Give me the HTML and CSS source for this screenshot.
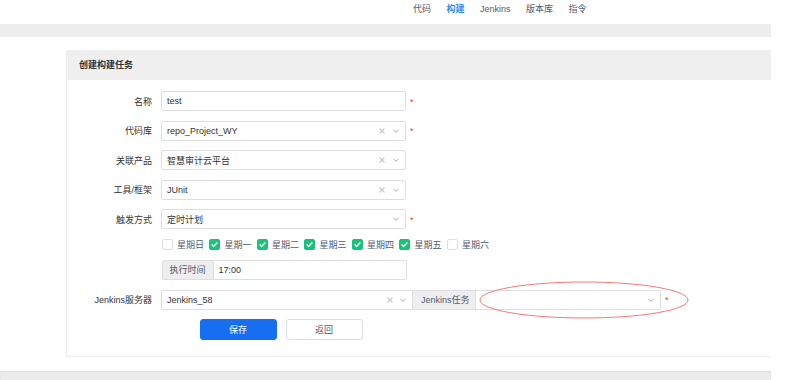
FILE: index.html
```html
<!DOCTYPE html>
<html lang="zh-CN">
<head>
    <meta charset="UTF-8">
    <meta name="viewport" content="width=device-width, initial-scale=1.0">
    <title>创建构建任务</title>
    <link rel="stylesheet" href="styles.css">
</head>
<body>
<div class="page">
    <div class="topnav">
        <a class="nav-item">代码</a>
        <a class="nav-item active">构建</a>
        <a class="nav-item">Jenkins</a>
        <a class="nav-item">版本库</a>
        <a class="nav-item">指令</a>
    </div>
    <div class="band"></div>

    <div class="card">
        <div class="card-head">创建构建任务</div>
        <form class="card-body">
            <div class="row">
                <label class="row-label">名称</label>
                <input class="input" type="text" value="test">
                <span class="req">*</span>
            </div>
            <div class="row">
                <label class="row-label">代码库</label>
                <div class="select">
                    <span class="select-value">repo_Project_WY</span>
                    <svg class="clear" width="6" height="6" viewBox="0 0 6 6"><path d="M0.5 0.5L5.5 5.5M5.5 0.5L0.5 5.5"/></svg>
                    <svg class="caret" width="6" height="4" viewBox="0 0 6 4"><path d="M0.5 0.8L3 3.2L5.5 0.8"/></svg>
                </div>
                <span class="req">*</span>
            </div>
            <div class="row">
                <label class="row-label">关联产品</label>
                <div class="select">
                    <span class="select-value">智慧审计云平台</span>
                    <svg class="clear" width="6" height="6" viewBox="0 0 6 6"><path d="M0.5 0.5L5.5 5.5M5.5 0.5L0.5 5.5"/></svg>
                    <svg class="caret" width="6" height="4" viewBox="0 0 6 4"><path d="M0.5 0.8L3 3.2L5.5 0.8"/></svg>
                </div>
            </div>
            <div class="row">
                <label class="row-label">工具/框架</label>
                <div class="select">
                    <span class="select-value">JUnit</span>
                    <svg class="clear" width="6" height="6" viewBox="0 0 6 6"><path d="M0.5 0.5L5.5 5.5M5.5 0.5L0.5 5.5"/></svg>
                    <svg class="caret" width="6" height="4" viewBox="0 0 6 4"><path d="M0.5 0.8L3 3.2L5.5 0.8"/></svg>
                </div>
            </div>
            <div class="row">
                <label class="row-label">触发方式</label>
                <div class="select">
                    <span class="select-value">定时计划</span>
                    <svg class="caret" width="6" height="4" viewBox="0 0 6 4"><path d="M0.5 0.8L3 3.2L5.5 0.8"/></svg>
                </div>
                <span class="req">*</span>
            </div>
            <div class="row check-row">
                <label class="check"><span class="box"></span>星期日</label>
                <label class="check"><span class="box checked"><svg width="11" height="11" viewBox="0 0 11 11"><path d="M2.6 5.6L4.6 7.5L8.4 3.6"/></svg></span>星期一</label>
                <label class="check"><span class="box checked"><svg width="11" height="11" viewBox="0 0 11 11"><path d="M2.6 5.6L4.6 7.5L8.4 3.6"/></svg></span>星期二</label>
                <label class="check"><span class="box checked"><svg width="11" height="11" viewBox="0 0 11 11"><path d="M2.6 5.6L4.6 7.5L8.4 3.6"/></svg></span>星期三</label>
                <label class="check"><span class="box checked"><svg width="11" height="11" viewBox="0 0 11 11"><path d="M2.6 5.6L4.6 7.5L8.4 3.6"/></svg></span>星期四</label>
                <label class="check"><span class="box checked"><svg width="11" height="11" viewBox="0 0 11 11"><path d="M2.6 5.6L4.6 7.5L8.4 3.6"/></svg></span>星期五</label>
                <label class="check"><span class="box"></span>星期六</label>
            </div>
            <div class="row indent">
                <div class="group">
                    <span class="addon">执行时间</span>
                    <input class="input group-input" type="text" value="17:00">
                </div>
            </div>
            <div class="row">
                <label class="row-label">Jenkins服务器</label>
                <div class="jenkins">
                    <div class="select select-server">
                        <span class="select-value">Jenkins_58</span>
                        <svg class="clear" width="6" height="6" viewBox="0 0 6 6"><path d="M0.5 0.5L5.5 5.5M5.5 0.5L0.5 5.5"/></svg>
                        <svg class="caret" width="6" height="4" viewBox="0 0 6 4"><path d="M0.5 0.8L3 3.2L5.5 0.8"/></svg>
                    </div>
                    <span class="addon addon-mid">Jenkins任务</span>
                    <div class="select select-job">
                        <span class="select-value"></span>
                        <svg class="caret" width="6" height="4" viewBox="0 0 6 4"><path d="M0.5 0.8L3 3.2L5.5 0.8"/></svg>
                    </div>
                    <svg class="mark" width="210" height="38" viewBox="0 0 210 38"><ellipse cx="105" cy="19" rx="104" ry="18"/></svg>
                </div>
                <span class="req">*</span>
            </div>
            <div class="row actions">
                <button type="button" class="btn btn-primary">保存</button>
                <button type="button" class="btn">返回</button>
            </div>
        </form>
    </div>

    <div class="footer-band"></div>
</div>
</body>
</html>
```

FILE: styles.css
```css
body {
    margin: 0;
    font-family: "Liberation Sans", "Noto Sans CJK SC", sans-serif;
    font-size: 9px;
    color: #333;
    background-color: #fff;
    overflow: hidden;
}
.page {
    width: 771px;
}
.topnav {
    height: 24px;
    display: flex;
    padding-left: 413px;
}
.nav-item {
    line-height: 18px;
    color: #515a6e;
    margin-right: 15.5px;
    cursor: pointer;
}
.nav-item.active {
    color: #2d8cf0;
    font-weight: bold;
}
.band {
    height: 13px;
    background-color: #ededed;
    margin-bottom: 13px;
}
.card {
    margin-left: 66px;
}
.card-head {
    height: 30px;
    line-height: 30px;
    padding-left: 13px;
    background-color: #efefef;
    color: #333;
    font-weight: bold;
}
.card-body {
    display: flex;
    flex-direction: column;
    gap: 9.5px;
    padding: 11px 0 16px;
    border-left: 1px solid #eeeeee;
    border-bottom: 1px solid #eeeeee;
    margin: 0;
}
.row {
    display: flex;
    align-items: center;
    height: 20px;
}
.row-label {
    width: 85px;
    margin-right: 9px;
    text-align: right;
    color: #333;
}
.input {
    box-sizing: border-box;
    width: 245px;
    height: 20px;
    border: 1px solid #dcdee2;
    border-radius: 2px;
    padding: 0 5px;
    font-family: inherit;
    font-size: 9px;
    color: #333;
    outline: none;
}
.req {
    color: #ed4014;
    margin-left: 4px;
    font-size: 9px;
    line-height: 1;
    padding-top: 2px;
}
.select {
    box-sizing: border-box;
    width: 245px;
    height: 20px;
    border: 1px solid #dcdee2;
    border-radius: 2px;
    padding: 0 5px;
    display: flex;
    align-items: center;
    background-color: #fff;
}
.select-value {
    flex: 1;
    color: #333;
}
.clear,
.caret {
    fill: none;
    stroke: #c5c8ce;
    stroke-width: 1.1;
}
.clear {
    margin-right: 8px;
}
.caret {
    margin-right: 1px;
}
.check-row {
    height: 12px;
    padding-left: 94.5px;
}
.check {
    display: flex;
    align-items: center;
    margin-right: 5px;
    color: #515a6e;
}
.box {
    box-sizing: border-box;
    width: 11px;
    height: 11px;
    border: 1px solid #dcdee2;
    border-radius: 2px;
    margin-right: 4.5px;
    background-color: #fff;
    position: relative;
}
.box.checked {
    border-color: #19c27a;
    background-color: #19c27a;
}
.box svg {
    position: absolute;
    left: -1px;
    top: -1px;
    fill: none;
    stroke: #fff;
    stroke-width: 1.4;
}
.indent {
    padding-left: 94.5px;
}
.group {
    display: flex;
    width: 245px;
}
.addon {
    box-sizing: border-box;
    height: 20px;
    line-height: 18px;
    padding: 0 7px;
    background-color: #eeeeee;
    border: 1px solid #dcdee2;
    border-radius: 2px 0 0 2px;
    color: #515a6e;
    white-space: nowrap;
}
.group-input {
    flex: 1;
    width: auto;
    border-left: none;
    border-radius: 0 2px 2px 0;
}
.jenkins {
    display: flex;
    position: relative;
}
.select-server {
    width: 252px;
    border-radius: 2px 0 0 2px;
}
.select-server .clear {
    margin-right: 7px;
}
.addon-mid {
    width: 63px;
    padding: 0 8px;
    border-left: none;
    border-radius: 0;
}
.select-job {
    width: 185px;
    border-left: none;
    border-radius: 0 2px 2px 0;
}
.mark {
    position: absolute;
    left: 318px;
    top: -9px;
    fill: none;
    stroke: #f07a7a;
    stroke-width: 1;
}
.actions {
    height: 21px;
    padding-left: 132.5px;
    gap: 9px;
}
.btn {
    box-sizing: border-box;
    width: 77px;
    height: 21px;
    border: 1px solid #dcdee2;
    border-radius: 3px;
    background-color: #fff;
    color: #515a6e;
    font-family: inherit;
    font-size: 9px;
    cursor: pointer;
    padding: 0;
}
.btn-primary {
    background-color: #166ff0;
    border-color: #166ff0;
    color: #fff;
}
.footer-band {
    margin-top: 14px;
    height: 20px;
    background-color: #ececec;
    box-shadow: inset 0 1px 2px rgba(0, 0, 0, 0.06);
}
```
